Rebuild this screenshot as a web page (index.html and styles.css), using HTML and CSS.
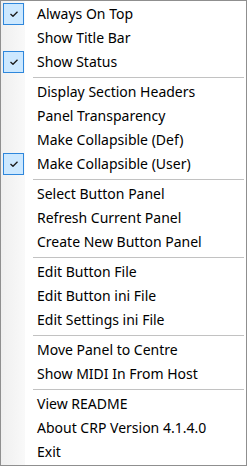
FILE: index.html
```html
<!DOCTYPE html>
<html lang="en">
<head>
    <meta charset="UTF-8">
    <meta name="viewport" content="width=device-width, initial-scale=1.0">
    <title>CRP Menu</title>
    <link rel="stylesheet" href="styles.css">
</head>
<body>
    <div class="menu">
        <ul class="menu-list">
            <li class="item checked"><span class="check"><svg viewBox="0 0 8 6" width="8" height="6"><path d="M0.5 3 L3 5.3 L7.5 0.7" fill="none" stroke="#1a1a1a" stroke-width="1.3"/></svg></span><span class="label">Always On Top</span></li>
            <li class="item"><span class="check"></span><span class="label">Show Title Bar</span></li>
            <li class="item checked"><span class="check"><svg viewBox="0 0 8 6" width="8" height="6"><path d="M0.5 3 L3 5.3 L7.5 0.7" fill="none" stroke="#1a1a1a" stroke-width="1.3"/></svg></span><span class="label">Show Status</span></li>
            <li class="sep"></li>
            <li class="item"><span class="check"></span><span class="label">Display Section Headers</span></li>
            <li class="item"><span class="check"></span><span class="label">Panel Transparency</span></li>
            <li class="item"><span class="check"></span><span class="label">Make Collapsible (Def)</span></li>
            <li class="item checked"><span class="check"><svg viewBox="0 0 8 6" width="8" height="6"><path d="M0.5 3 L3 5.3 L7.5 0.7" fill="none" stroke="#1a1a1a" stroke-width="1.3"/></svg></span><span class="label">Make Collapsible (User)</span></li>
            <li class="sep"></li>
            <li class="item"><span class="check"></span><span class="label">Select Button Panel</span></li>
            <li class="item"><span class="check"></span><span class="label">Refresh Current Panel</span></li>
            <li class="item"><span class="check"></span><span class="label">Create New Button Panel</span></li>
            <li class="sep"></li>
            <li class="item"><span class="check"></span><span class="label">Edit Button File</span></li>
            <li class="item"><span class="check"></span><span class="label">Edit Button ini File</span></li>
            <li class="item"><span class="check"></span><span class="label">Edit Settings ini File</span></li>
            <li class="sep"></li>
            <li class="item"><span class="check"></span><span class="label">Move Panel to Centre</span></li>
            <li class="item"><span class="check"></span><span class="label">Show MIDI In From Host</span></li>
            <li class="sep"></li>
            <li class="item"><span class="check"></span><span class="label">View README</span></li>
            <li class="item"><span class="check"></span><span class="label">About CRP Version 4.1.4.0</span></li>
            <li class="item"><span class="check"></span><span class="label">Exit</span></li>
        </ul>
    </div>
</body>
</html>
```

FILE: styles.css
```css
* {
    margin: 0;
    padding: 0;
    box-sizing: border-box;
}

body {
    font-family: 'Noto Sans', 'Open Sans', sans-serif;
    font-size: 14px;
    color: #000;
    background-color: #fff;
}

/* menu frame */
.menu {
    width: 247px;
    height: 466px;
    border: 1px solid #8f8f8f;
    padding: 1px 0;
    background: linear-gradient(to right, #efefef 0, #f9f9f9 24px, #fff 24px);
}

.menu-list {
    list-style: none;
}

/* menu items */
.item {
    display: flex;
    align-items: center;
    height: 24px;
}

.check {
    width: 21px;
    height: 22px;
    margin: 0 13px 0 2px;
    display: flex;
    align-items: center;
    justify-content: center;
}

.checked .check {
    background-color: #cce8ff;
    border: 1px solid #2e87dc;
}

.label {
    white-space: nowrap;
    line-height: 24px;
}

/* separators */
.sep {
    height: 6px;
    display: flex;
    align-items: center;
    margin: 0 2px 0 32px;
}

.sep::after {
    content: '';
    flex: 1;
    height: 1px;
    background-color: #c2c2c2;
}
```
